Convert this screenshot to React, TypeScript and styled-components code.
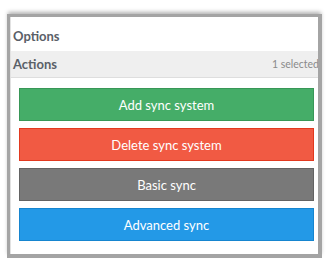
import React from "react";
import styled, { createGlobalStyle } from "styled-components";

const GlobalStyle = createGlobalStyle`
  html, body {
    margin: 0;
    padding: 0;
    background: #ffffff;
  }
  body {
    font-family: Lato, "Open Sans", Arial, sans-serif;
  }
`;

const Page = styled.div`
  width: 330px;
  height: 259px;
  padding: 14px 0 0 7px;
  box-sizing: border-box;
`;

const Frame = styled.div`
  width: 315px;
  height: 244px;
  box-sizing: border-box;
  border-style: solid;
  border-color: #a4a4a4;
  border-width: 3px 4px 4px 3px;
  box-shadow: 0 -3px 4px -1px rgba(0, 0, 0, 0.3);
  background: #ffffff;
  overflow: hidden;
  display: flex;
  flex-direction: column;
`;

const Title = styled.div`
  height: 34px;
  display: flex;
  align-items: center;
  padding: 3px 0 0 2px;
  box-sizing: border-box;
  font-size: 13px;
  font-weight: 700;
  color: #5a6068;
  border-left: 1px solid #e2e2e2;
`;

const SectionHeader = styled.div`
  height: 26px;
  display: flex;
  align-items: center;
  justify-content: space-between;
  padding: 0 0 0 2px;
  background: #efefef;
  border-left: 1px solid #e2e2e2;
  border-bottom: 1px solid #dedede;
  font-size: 13px;
  font-weight: 700;
  color: #5a6068;
`;

const Count = styled.span`
  font-size: 10.5px;
  font-weight: 400;
  color: #8a8a8a;
  margin-right: -1px;
`;

const ButtonList = styled.div`
  flex: 1;
  display: flex;
  flex-direction: column;
  gap: 7px;
  padding: 10px 4px 0 8px;
  border-left: 1px solid #e2e2e2;
`;

const tones = {
  green: { bg: "#45ad68", border: "#389757" },
  red: { bg: "#f15a43", border: "#e2391f" },
  gray: { bg: "#797979", border: "#636363" },
  blue: { bg: "#2399e7", border: "#1685cf" },
};

type Tone = keyof typeof tones;

const ActionButton = styled.button<{ $tone: Tone }>`
  height: 33px;
  box-sizing: border-box;
  border: 1px solid ${(p) => tones[p.$tone].border};
  background: ${(p) => tones[p.$tone].bg};
  color: #ffffff;
  font-family: Lato, "Open Sans", Arial, sans-serif;
  font-size: 13px;
  padding: 0;
  cursor: pointer;
`;

const actions: { label: string; tone: Tone }[] = [
  { label: "Add sync system", tone: "green" },
  { label: "Delete sync system", tone: "red" },
  { label: "Basic sync", tone: "gray" },
  { label: "Advanced sync", tone: "blue" },
];

export default function App() {
  return (
    <>
      <GlobalStyle />
      <Page>
        <Frame>
          <Title>Options</Title>
          <SectionHeader>
            Actions
            <Count>1 selected</Count>
          </SectionHeader>
          <ButtonList>
            {actions.map((a) => (
              <ActionButton key={a.label} $tone={a.tone}>
                {a.label}
              </ActionButton>
            ))}
          </ButtonList>
        </Frame>
      </Page>
    </>
  );
}
